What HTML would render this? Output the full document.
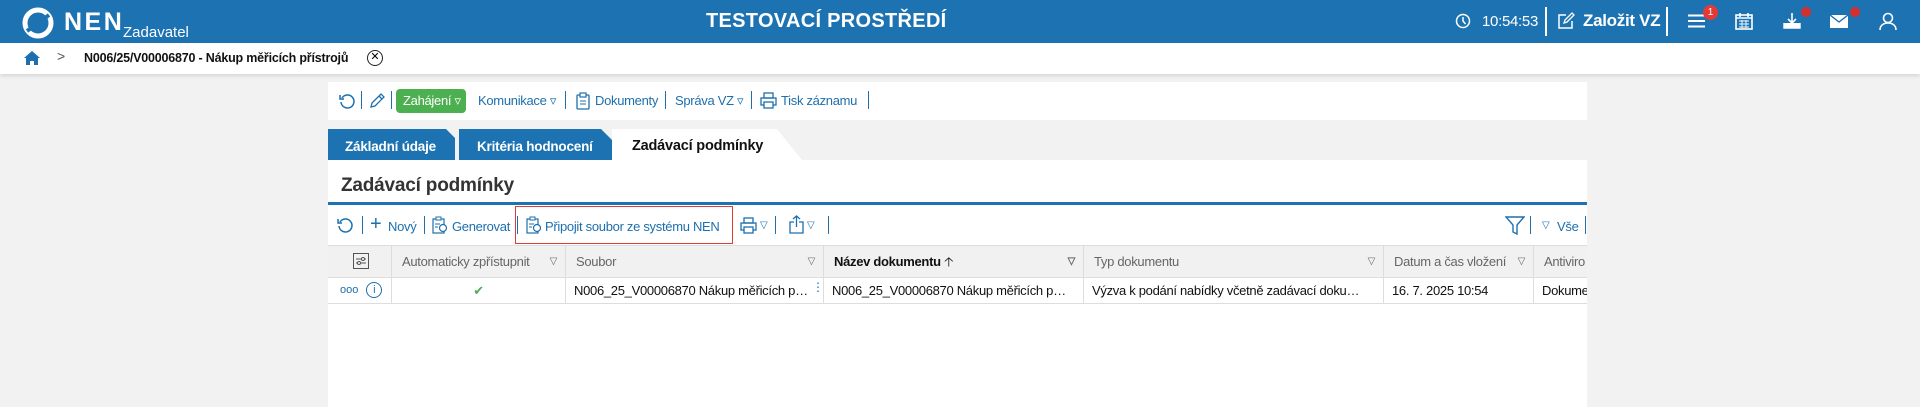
<!DOCTYPE html>
<html><head><meta charset="utf-8"><style>
*{margin:0;padding:0;box-sizing:border-box}
body{width:1920px;height:407px;overflow:hidden;background:#f2f2f2;font-family:"Liberation Sans",Arial,sans-serif;position:relative}
.a{position:absolute}
.hdr{left:0;top:0;width:1920px;height:43px;background:#1d73b2;color:#fff}
.bc{left:0;top:43px;width:1920px;height:31px;background:#fff;box-shadow:0 2px 4px rgba(0,0,0,.12)}
.blue{color:#1d6fae}
.sep{position:absolute;width:1px;background:#1d6fae}
.t13{font-size:13px;white-space:nowrap;letter-spacing:-.3px}
.th{top:246px;height:32px;background:#f1f1f1;border-right:1px solid #ddd;border-bottom:1px solid #ddd;font-size:13px;letter-spacing:-.3px;color:#666;line-height:31px;padding-left:10px;white-space:nowrap;overflow:hidden}
.td{top:278px;height:26px;border-right:1px solid #ddd;border-bottom:1px solid #ddd;font-size:13px;letter-spacing:-.3px;color:#111;line-height:25px;padding-left:8px;padding-right:14px;white-space:nowrap;overflow:hidden;text-overflow:ellipsis;background:#fff}
.dd{position:absolute;right:8px;top:0;font-size:10px;color:#666}
</style></head><body>
<div class="a hdr">
 <svg class="a" style="left:22px;top:7px" width="32" height="32" viewBox="0 0 32 32"><circle cx="16" cy="16" r="13" fill="none" stroke="#fff" stroke-width="5"/><path d="M5 24 L27 8" stroke="#1d73b2" stroke-width="4"/></svg>
 <div class="a" style="left:64px;top:8px;font-size:25px;font-weight:bold;letter-spacing:2.5px">NEN</div>
 <div class="a" style="left:123px;top:24px;font-size:15px">Zadavatel</div>
 <div class="a" style="left:706px;top:10px;font-size:20px;font-weight:bold;letter-spacing:.3px">TESTOVACÍ PROSTŘEDÍ</div>
 <svg class="a" style="left:1455px;top:13px" width="16" height="16" viewBox="0 0 16 16"><circle cx="8" cy="8" r="6.5" fill="none" stroke="#fff" stroke-width="1.5"/><path d="M8 4v4l2.5 3" stroke="#fff" stroke-width="1.5" fill="none"/></svg>
 <div class="a" style="left:1482px;top:13px;font-size:15px;letter-spacing:-.3px">10:54:53</div>
 <div class="a" style="left:1545px;top:7px;width:2px;height:29px;background:#fff"></div>
 <svg class="a" style="left:1557px;top:12px" width="18" height="18" viewBox="0 0 18 18"><path d="M9 3H2v13h13V9" fill="none" stroke="#fff" stroke-width="1.5"/><path d="M7 11l1-3 7-7 2 2-7 7z" fill="none" stroke="#fff" stroke-width="1.3"/></svg>
 <div class="a" style="left:1583px;top:11px;font-size:17px;font-weight:bold;letter-spacing:-.3px">Založit VZ</div>
 <div class="a" style="left:1666px;top:7px;width:2px;height:29px;background:#fff"></div>
 <svg class="a" style="left:1688px;top:14px" width="17" height="14"><path d="M0 1.5h17M0 7h17M0 12.5h17" stroke="#fff" stroke-width="2"/></svg>
 <div class="a" style="left:1703px;top:5px;width:15px;height:15px;border-radius:50%;background:#e53935;font-size:10px;text-align:center;line-height:15px">1</div>
 <svg class="a" style="left:1735px;top:12px" width="18" height="18" viewBox="0 0 18 18"><rect x="1" y="3" width="16" height="14" fill="none" stroke="#fff" stroke-width="1.6"/><path d="M1 6h16M5 1v4M13 1v4" stroke="#fff" stroke-width="1.6"/><path d="M4 9h10M4 12h10M4 15h10M7 8v8M11 8v8" stroke="#fff" stroke-width=".9"/></svg>
 <svg class="a" style="left:1783px;top:12px" width="18" height="18" viewBox="0 0 18 18"><path d="M9 1v9M5 7l4 4 4-4" fill="none" stroke="#fff" stroke-width="1.6"/><path d="M1 11v5h16v-5" fill="#fff" stroke="#fff" stroke-width="1.4"/></svg>
 <div class="a" style="left:1801px;top:7px;width:10px;height:10px;border-radius:50%;background:#d32f2f"></div>
 <svg class="a" style="left:1830px;top:15px" width="18" height="13" viewBox="0 0 18 13"><rect width="18" height="13" fill="#fff"/><path d="M0 0l9 7 9-7" fill="none" stroke="#1d73b2" stroke-width="1.4"/></svg>
 <div class="a" style="left:1850px;top:7px;width:10px;height:10px;border-radius:50%;background:#d32f2f"></div>
 <svg class="a" style="left:1879px;top:12px" width="18" height="18" viewBox="0 0 18 18"><circle cx="9" cy="6" r="4.5" fill="none" stroke="#fff" stroke-width="1.6"/><path d="M1 18c0-5 4-7 8-7s8 2 8 7" fill="none" stroke="#fff" stroke-width="1.6"/></svg>
</div>
<div class="a bc">
 <svg class="a" style="left:23px;top:7px" width="18" height="16" viewBox="0 0 18 16"><path d="M9 1L1 8h2v7h4v-4h4v4h4V8h2z" fill="#1d6fae"/></svg>
 <div class="a" style="left:57px;top:5px;font-size:14px;color:#555">&gt;</div>
 <div class="a" style="left:84px;top:8px;font-size:12.5px;font-weight:bold;color:#111;letter-spacing:-.2px">N006/25/V00006870 - Nákup měřicích přístrojů</div>
 <div class="a" style="left:367px;top:7px;width:16px;height:16px;border:1.5px solid #222;border-radius:50%;font-size:11px;text-align:center;line-height:13px">✕</div>
</div>
<!-- top toolbar -->
<div class="a" style="left:328px;top:82px;width:1259px;height:38px;background:#fff"></div>
<svg class="a" style="left:339px;top:93px" width="17" height="17" viewBox="0 0 17 17"><path d="M3 5A6.5 6.5 0 1 1 2 9" fill="none" stroke="#1d6fae" stroke-width="1.5"/><path d="M1 2v4h4" fill="none" stroke="#1d6fae" stroke-width="1.5"/></svg>
<div class="sep" style="left:361px;top:91px;height:18px"></div>
<svg class="a" style="left:369px;top:92px" width="17" height="17" viewBox="0 0 17 17"><path d="M2 15l1-4 9-9 3 3-9 9z M10 4l3 3" fill="none" stroke="#1d6fae" stroke-width="1.3"/></svg>
<div class="sep" style="left:391px;top:91px;height:18px"></div>
<div class="a t13" style="left:396px;top:89px;width:70px;height:24px;background:#4caf50;color:#fff;border-radius:4px;line-height:24px;padding-left:7px">Zahájení ▿</div>
<div class="a t13 blue" style="left:478px;top:93px">Komunikace ▿</div>
<div class="sep" style="left:565px;top:91px;height:18px"></div>
<svg class="a" style="left:576px;top:92px" width="14" height="18" viewBox="0 0 14 18"><rect x="1" y="3" width="12" height="14" rx="1" fill="none" stroke="#1d6fae" stroke-width="1.3"/><rect x="4" y="1" width="6" height="4" fill="#fff" stroke="#1d6fae" stroke-width="1.2"/><path d="M4 9h6M4 12h6" stroke="#1d6fae"/></svg>
<div class="a t13 blue" style="left:595px;top:93px">Dokumenty</div>
<div class="sep" style="left:665px;top:91px;height:18px"></div>
<div class="a t13 blue" style="left:675px;top:93px">Správa VZ ▿</div>
<div class="sep" style="left:751px;top:91px;height:18px"></div>
<svg class="a" style="left:760px;top:92px" width="17" height="17" viewBox="0 0 17 17"><rect x="4" y="1" width="9" height="5" fill="none" stroke="#1d6fae" stroke-width="1.3"/><rect x="1" y="6" width="15" height="7" fill="none" stroke="#1d6fae" stroke-width="1.3"/><rect x="4" y="10" width="9" height="6" fill="#fff" stroke="#1d6fae" stroke-width="1.3"/></svg>
<div class="a t13 blue" style="left:781px;top:93px">Tisk záznamu</div>
<div class="sep" style="left:868px;top:91px;height:18px"></div>
<!-- tabs -->
<div class="a" style="left:328px;top:129px;width:127px;height:31px;background:#1d73b2;clip-path:polygon(0 0,118px 0,127px 9px,127px 31px,0 31px)"></div>
<div class="a" style="left:345px;top:139px;font-size:13.5px;font-weight:bold;color:#fff;letter-spacing:-.2px">Základní údaje</div>
<div class="a" style="left:459px;top:129px;width:153px;height:31px;background:#1d73b2;clip-path:polygon(0 0,142px 0,153px 11px,153px 31px,0 31px)"></div>
<div class="a" style="left:477px;top:139px;font-size:13.5px;font-weight:bold;color:#fff;letter-spacing:-.2px">Kritéria hodnocení</div>
<div class="a" style="left:612px;top:129px;width:190px;height:31px;background:#fff;clip-path:polygon(0 0,165px 0,190px 31px,0 31px)"></div>
<div class="a" style="left:632px;top:138px;font-size:14.5px;font-weight:bold;color:#111;letter-spacing:-.2px">Zadávací podmínky</div>
<!-- main panel -->
<div class="a" style="left:328px;top:160px;width:1259px;height:247px;background:#fff"></div>
<div class="a" style="left:341px;top:175px;font-size:19px;font-weight:bold;color:#333;letter-spacing:-.2px">Zadávací podmínky</div>
<div class="a" style="left:328px;top:202px;width:1259px;height:3px;background:#1d73b2"></div>
<!-- toolbar 2 -->
<svg class="a" style="left:337px;top:217px" width="17" height="17" viewBox="0 0 17 17"><path d="M3 5A6.5 6.5 0 1 1 2 9" fill="none" stroke="#1d6fae" stroke-width="1.5"/><path d="M1 2v4h4" fill="none" stroke="#1d6fae" stroke-width="1.5"/></svg>
<div class="sep" style="left:362px;top:216px;height:18px"></div>
<div class="a blue" style="left:370px;top:213px;font-size:20px">+</div>
<div class="a t13 blue" style="left:388px;top:219px">Nový</div>
<div class="sep" style="left:424px;top:216px;height:18px"></div>
<svg class="a" style="left:432px;top:216px" width="16" height="18" viewBox="0 0 16 18"><rect x="1" y="3" width="11" height="14" fill="none" stroke="#1d6fae" stroke-width="1.2"/><rect x="4" y="1" width="5" height="3" fill="#fff" stroke="#1d6fae"/><circle cx="11" cy="12" r="3.5" fill="#fff" stroke="#1d6fae" stroke-width="1.2"/><path d="M3 8h5M3 11h3" stroke="#1d6fae"/></svg>
<div class="a t13 blue" style="left:452px;top:219px">Generovat</div>
<div class="sep" style="left:517px;top:216px;height:18px"></div>
<div class="a" style="left:515px;top:206px;width:218px;height:38px;border:1px solid #e53935"></div>
<svg class="a" style="left:526px;top:216px" width="16" height="18" viewBox="0 0 16 18"><rect x="1" y="3" width="11" height="14" fill="none" stroke="#1d6fae" stroke-width="1.2"/><rect x="4" y="1" width="5" height="3" fill="#fff" stroke="#1d6fae"/><circle cx="11" cy="12" r="3.5" fill="#fff" stroke="#1d6fae" stroke-width="1.2"/><path d="M3 8h5M3 11h3" stroke="#1d6fae"/></svg>
<div class="a t13 blue" style="left:545px;top:219px;letter-spacing:-.3px">Připojit soubor ze systému NEN</div>
<svg class="a" style="left:740px;top:217px" width="17" height="17" viewBox="0 0 17 17"><rect x="4" y="1" width="9" height="5" fill="none" stroke="#1d6fae" stroke-width="1.3"/><rect x="1" y="6" width="15" height="7" fill="none" stroke="#1d6fae" stroke-width="1.3"/><rect x="4" y="10" width="9" height="6" fill="#fff" stroke="#1d6fae" stroke-width="1.3"/></svg>
<div class="a blue" style="left:760px;top:220px;font-size:10px">▽</div>
<div class="sep" style="left:775px;top:216px;height:18px"></div>
<svg class="a" style="left:789px;top:215px" width="15" height="19" viewBox="0 0 15 19"><path d="M5 7H1v11h13V7h-4M7.5 12V1M4 4l3.5-3 3.5 3" fill="none" stroke="#1d6fae" stroke-width="1.3"/></svg>
<div class="a blue" style="left:807px;top:220px;font-size:10px">▽</div>
<div class="sep" style="left:828px;top:216px;height:18px"></div>
<svg class="a" style="left:1505px;top:216px" width="20" height="19" viewBox="0 0 20 19"><path d="M1 1h18l-7 8v9l-4-2V9z" fill="none" stroke="#1d6fae" stroke-width="1.4"/></svg>
<div class="sep" style="left:1530px;top:216px;height:18px"></div>
<div class="a blue" style="left:1542px;top:220px;font-size:10px">▽</div>
<div class="a t13 blue" style="left:1557px;top:219px">Vše</div>
<div class="sep" style="left:1585px;top:216px;height:18px"></div>
<!-- table -->
<div class="a" style="left:328px;top:245px;width:1259px;height:1px;background:#ddd"></div>
<div class="a th" style="left:328px;width:64px"></div>
<svg class="a" style="left:353px;top:253px" width="16" height="16" viewBox="0 0 16 16"><rect x=".5" y=".5" width="15" height="15" fill="none" stroke="#555"/><path d="M3 6h10M3 10h10" stroke="#555"/><circle cx="10" cy="6" r="1.5" fill="#fff" stroke="#555"/><circle cx="6" cy="10" r="1.5" fill="#fff" stroke="#555"/></svg>
<div class="a th" style="left:392px;width:174px">Automaticky zpřístupnit<span class="dd">▽</span></div>
<div class="a th" style="left:566px;width:258px">Soubor<span class="dd">▽</span></div>
<div class="a th" style="left:824px;width:260px;color:#111;font-weight:bold">Název dokumentu <span style="font-weight:normal">🡡</span><span class="dd">▽</span></div>
<div class="a th" style="left:1084px;width:300px">Typ dokumentu<span class="dd">▽</span></div>
<div class="a th" style="left:1384px;width:150px">Datum a čas vložení<span class="dd">▽</span></div>
<div class="a th" style="left:1534px;width:53px;border-right:none">Antiviro</div>
<div class="a td" style="left:328px;width:64px;color:#1d6fae;font-size:11px;padding:0 0 0 12px;text-overflow:clip;letter-spacing:0">ooo<span style="display:inline-block;width:16px;height:16px;border:1.3px solid #1d6fae;border-radius:50%;text-align:center;line-height:14px;font-size:11px;margin-left:8px;vertical-align:middle">i</span></div>
<div class="a td" style="left:392px;width:174px;color:#4caf50;text-align:center;padding:0">✔</div>
<div class="a td" style="left:566px;width:258px">N006_25_V00006870 Nákup měřicích přístrojů</div>
<div class="a" style="left:812px;top:280px;font-size:12px;color:#1d6fae">⋮</div>
<div class="a td" style="left:824px;width:260px">N006_25_V00006870 Nákup měřicích přístrojů</div>
<div class="a td" style="left:1084px;width:300px">Výzva k podání nabídky včetně zadávací dokumentace</div>
<div class="a td" style="left:1384px;width:150px">16. 7. 2025 10:54</div>
<div class="a td" style="left:1534px;width:53px;border-right:none;padding-right:0;text-overflow:clip">Dokume</div>
</body></html>
